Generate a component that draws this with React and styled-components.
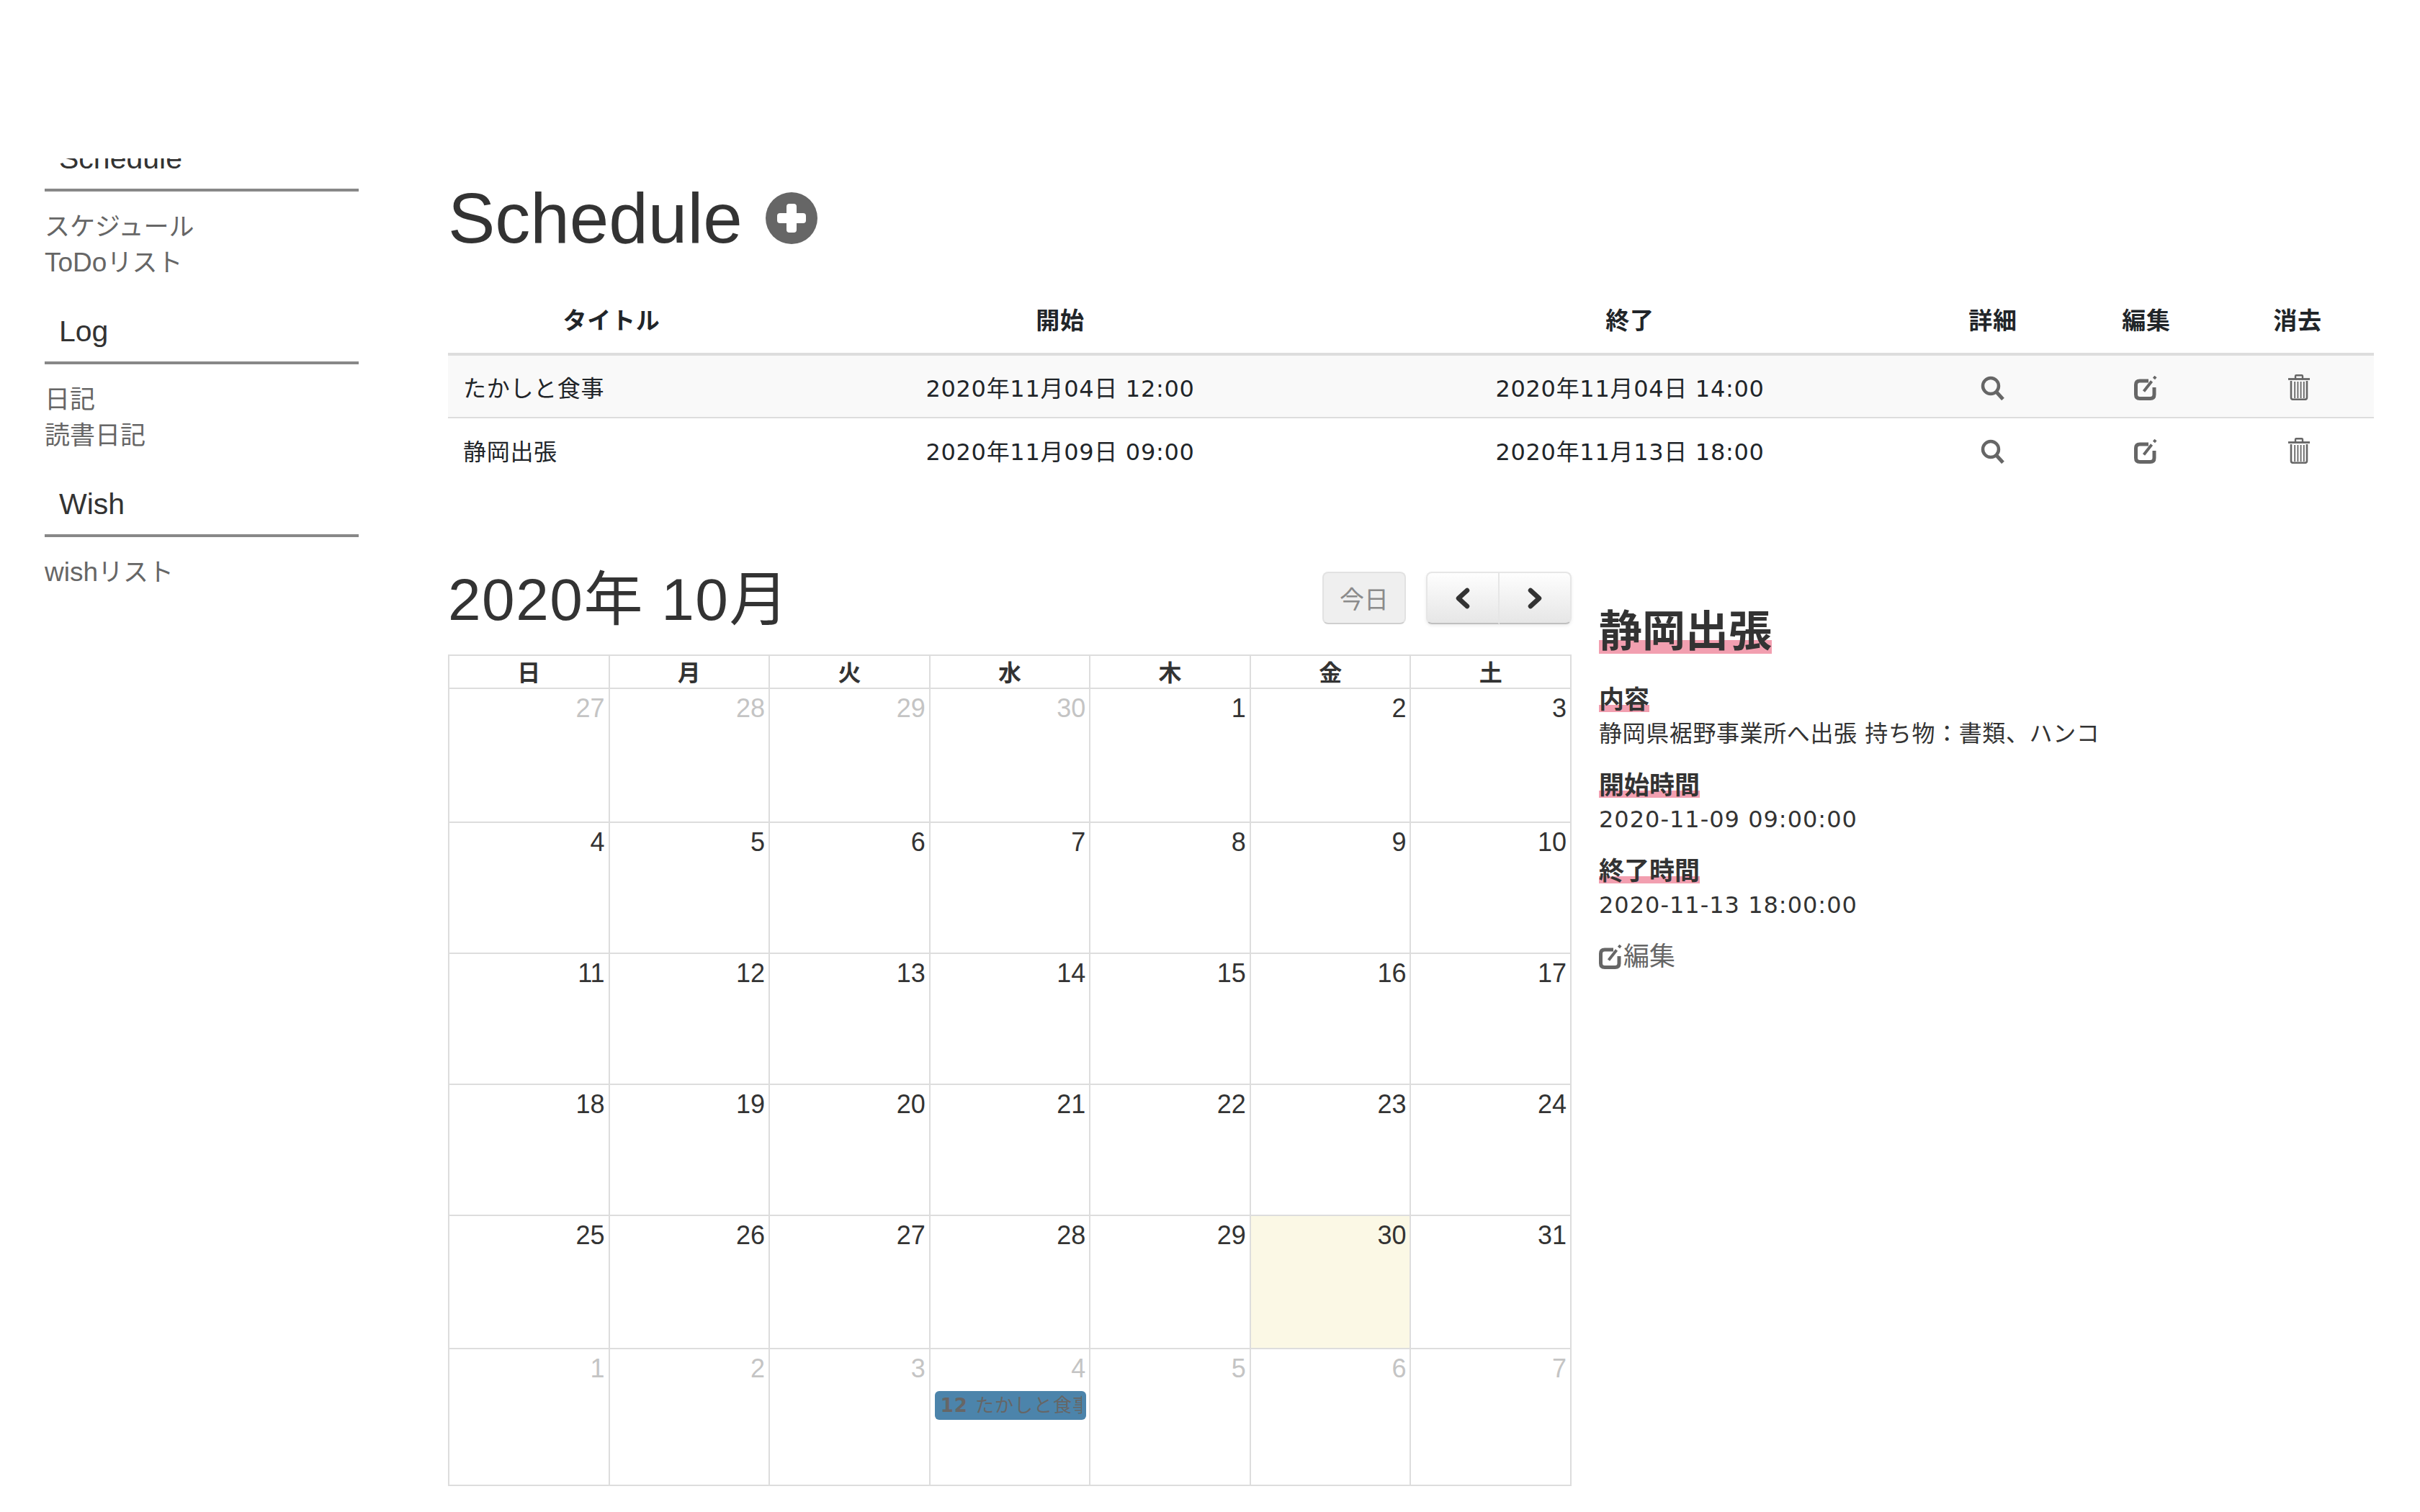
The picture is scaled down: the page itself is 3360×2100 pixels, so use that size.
import React from 'react'
import styled, { createGlobalStyle } from 'styled-components'

const SANS = '"Liberation Sans", "Noto Sans CJK JP", sans-serif'
const BODY = '"DejaVu Sans", "Noto Sans CJK JP", sans-serif'

const GlobalStyle = createGlobalStyle`
  html, body { margin: 0; padding: 0; background: #fff; }
  body { width: 3360px; height: 2100px; overflow: hidden; font-family: ${SANS}; color: #333; }
`

const Page = styled.div`
  display: flex;
  align-items: flex-start;
  width: 3360px;
  height: 2100px;
`

const Sidebar = styled.nav`
  flex: none;
  width: 436px;
  margin-left: 62px;
  padding-top: 220px;
`

const SideSection = styled.section`
  margin-bottom: 40px;
`

const SideHead = styled.h2`
  display: flex;
  align-items: flex-end;
  box-sizing: content-box;
  height: ${p => (p.$clipped ? '42px' : '72px')};
  margin: 0;
  padding: 0 0 0 20px;
  overflow: hidden;
  border-bottom: 4px solid #888;
  font-size: 41px;
  font-weight: 400;
  line-height: 60px;
  color: #333;
`

const SideHeadText = styled.span`
  display: block;
  padding-bottom: 12px;
`

const SideList = styled.ul`
  list-style: none;
  margin: 24px 0 0;
  padding: 0;
  font-size: 35px;
  line-height: 50px;
  color: #666;
`

const Latin = styled.span`
  font-size: 37px;
`

const Main = styled.main`
  flex: none;
  width: 2674px;
  margin-left: 124px;
  padding-top: 250px;
`

const TitleRow = styled.div`
  display: flex;
  align-items: center;
  gap: 32px;
  height: 106px;
  margin-bottom: 44px;
`

const Title = styled.h1`
  margin: 0;
  font-size: 98px;
  font-weight: 400;
  line-height: 106px;
  color: #333;
`

const ListTable = styled.table`
  width: 100%;
  table-layout: fixed;
  border-collapse: collapse;
  font-family: ${BODY};
  font-size: 32px;
  letter-spacing: 0.7px;
  color: #212529;
`

const HeadCell = styled.th`
  width: ${p => p.$w}px;
  height: 86px;
  padding: 0 0 4px;
  border-bottom: 4px solid #ddd;
  font-size: 33px;
  font-weight: 700;
  text-align: center;
`

const Row = styled.tr`
  height: 88px;
  background: ${p => (p.$striped ? '#f9f9f9' : '#fff')};
  border-bottom: ${p => (p.$striped ? '2px solid #ddd' : 'none')};
`

const Cell = styled.td`
  padding: ${p => (p.$left ? '0 0 0 21px' : '0')};
  text-align: ${p => (p.$left ? 'left' : 'center')};
  vertical-align: middle;
`

const Icon = styled.svg`
  display: inline-block;
  vertical-align: middle;
  fill: none;
  stroke: #666;
`

const TrashSvg = styled(Icon)`
  margin-left: 3px;
`

const Lower = styled.div`
  display: flex;
  gap: 38px;
  margin-top: 126px;
`

const CalendarCol = styled.div`
  flex: none;
  width: 1560px;
`

const Toolbar = styled.div`
  display: flex;
  align-items: center;
  height: 73px;
  margin-bottom: 42px;
`

const MonthTitle = styled.h2`
  flex: 1;
  margin: 0;
  padding-top: 4px;
  font-size: 82px;
  font-weight: 400;
  line-height: 76px;
  letter-spacing: 1.5px;
  color: #333;
  white-space: nowrap;
`

const TodayButton = styled.button`
  width: 116px;
  height: 73px;
  margin-right: 28px;
  padding: 0;
  border: 2px solid #e2e2e2;
  border-bottom-color: #cfcfcf;
  border-radius: 8px;
  background: #efefef;
  font-family: ${SANS};
  font-size: 34px;
  color: #8b8b8b;
`

const NavGroup = styled.div`
  display: flex;
  width: 202px;
  height: 73px;
  border-radius: 8px;
  box-shadow: 0 2px 4px rgba(0, 0, 0, 0.08);
`

const NavButton = styled.button`
  display: flex;
  flex: 1;
  align-items: center;
  justify-content: center;
  padding: 0;
  border: 2px solid #e6e6e6;
  border-bottom-color: #bfbfbf;
  border-left-width: ${p => (p.$right ? '0' : '2px')};
  border-radius: ${p => (p.$right ? '0 8px 8px 0' : '8px 0 0 8px')};
  background: linear-gradient(#fefefe, #e6e6e6);
`

const Chevron = styled.svg`
  fill: none;
  stroke: #333;
  stroke-width: 6.5;
  stroke-linecap: round;
  stroke-linejoin: round;
`

const Grid = styled.div`
  display: grid;
  grid-template-columns: repeat(7, 1fr);
  grid-template-rows: 46px 186px 182px 182px 182px 185px 190px;
  box-sizing: border-box;
  width: 1560px;
  border-top: 2px solid #ddd;
  border-left: 2px solid #ddd;
`

const Weekday = styled.div`
  border-right: 2px solid #ddd;
  border-bottom: 2px solid #ddd;
  font-size: 32px;
  font-weight: 700;
  line-height: 48px;
  text-align: center;
  color: #333;
`

const Day = styled.div`
  overflow: hidden;
  border-right: 2px solid #ddd;
  border-bottom: 2px solid #ddd;
  background: ${p => (p.$today ? '#fbf8e5' : '#fff')};
`

const DayNumber = styled.div`
  padding: 7px 5px 0 0;
  font-size: 36px;
  line-height: 40px;
  text-align: right;
  color: ${p => (p.$muted ? '#c4c4c4' : '#333')};
`

const EventChip = styled.div`
  height: 40px;
  margin: 11px 4px 0 6px;
  padding: 0 6px 0 8px;
  border-radius: 6px;
  background: #4c84ab;
  font-family: ${BODY};
  font-size: 26px;
  line-height: 40px;
  letter-spacing: 1px;
  color: #666;
`

const EventText = styled.div`
  overflow: hidden;
  white-space: nowrap;
`

const EventTime = styled.b`
  margin-right: 10px;
  font-weight: 700;
`

const Detail = styled.aside`
  flex: 1;
  padding-top: 52px;
  font-family: ${BODY};
  font-size: 32px;
  color: #333;
`

const Marker = styled.span`
  display: table;
  background: linear-gradient(transparent 70%, #f29fb0 70%);
  font-family: ${BODY};
  font-weight: 700;
  letter-spacing: 0;
`

const DetailTitle = styled(Marker)`
  margin-bottom: 47px;
  font-size: 60px;
  line-height: 62px;
`

const DetailLabel = styled(Marker)`
  margin-bottom: 8px;
  font-size: 35px;
  line-height: 34px;
`

const DetailValue = styled.p`
  margin: 0 0 33px;
  line-height: 44px;
  letter-spacing: ${p => (p.$tight ? '0.6px' : '1px')};
  white-space: nowrap;
`

const EditLink = styled.a`
  display: flex;
  align-items: center;
  margin-top: -5px;
  font-family: ${SANS};
  font-size: 36px;
  line-height: 44px;
  color: #666;
`

const PlusIcon = () => (
  <svg width="72" height="72" viewBox="0 0 72 72">
    <circle cx="36" cy="36" r="36" fill="#666" />
    <rect x="16" y="29" width="40" height="14" rx="4" fill="#fff" />
    <rect x="29" y="16" width="14" height="40" rx="4" fill="#fff" />
  </svg>
)

const SearchIcon = () => (
  <Icon width="34" height="34" viewBox="0 0 34 34" strokeWidth="4.5">
    <circle cx="14" cy="14" r="11" />
    <path d="M21.5 22 L31 32.5" strokeWidth="5" />
  </Icon>
)

const EditIcon = () => (
  <Icon width="34" height="34" viewBox="0 0 34 34" strokeWidth="5">
    <path d="M20 7 H8 Q2.5 7 2.5 12.5 V26 Q2.5 31.5 8 31.5 H22.5 Q28 31.5 28 26 V16" />
    <path d="M13.5 21.5 L24.5 7.5" strokeWidth="4" />
    <path d="M27.5 4 L30 1" strokeWidth="4" />
  </Icon>
)

const TrashIcon = () => (
  <TrashSvg width="30" height="36" viewBox="0 0 30 36" strokeWidth="2.4">
    <path d="M0 6.5 H30" strokeWidth="2.8" />
    <path d="M10 6 V2.4 Q10 1.2 11.2 1.2 H18.8 Q20 1.2 20 2.4 V6" />
    <path d="M4 9 V32 Q4 34.8 6.8 34.8 H23.2 Q26 34.8 26 32 V9" strokeWidth="2.6" />
    <path d="M9.2 10 V33 M13.4 10 V33 M17.6 10 V33 M21.8 10 V33" strokeWidth="1.8" />
  </TrashSvg>
)

const sideSections = [
  { title: 'Schedule', clipped: true, items: [['', 'スケジュール'], ['ToDo', 'リスト']] },
  { title: 'Log', items: [['', '日記'], ['', '読書日記']] },
  { title: 'Wish', items: [['wish', 'リスト']] },
]

const columns = [
  ['タイトル', 454],
  ['開始', 792],
  ['終了', 790],
  ['詳細', 218],
  ['編集', 208],
  ['消去', 212],
]

const schedules = [
  { title: 'たかしと食事', start: '2020年11月04日 12:00', end: '2020年11月04日 14:00' },
  { title: '静岡出張', start: '2020年11月09日 09:00', end: '2020年11月13日 18:00' },
]

const weekdays = ['日', '月', '火', '水', '木', '金', '土']

const days = [
  ...[27, 28, 29, 30].map(n => ({ n, muted: true })),
  ...Array.from({ length: 31 }, (_, i) => ({ n: i + 1, today: i + 1 === 30 })),
  ...[1, 2, 3, 4, 5, 6, 7].map(n => ({ n, muted: true, event: n === 4 })),
]

export default function App() {
  return (
    <Page>
      <GlobalStyle />
      <Sidebar>
        {sideSections.map(section => (
          <SideSection key={section.title}>
            <SideHead $clipped={section.clipped}>
              <SideHeadText>{section.title}</SideHeadText>
            </SideHead>
            <SideList>
              {section.items.map(([latin, text]) => (
                <li key={text}>
                  {latin && <Latin>{latin}</Latin>}
                  {text}
                </li>
              ))}
            </SideList>
          </SideSection>
        ))}
      </Sidebar>

      <Main>
        <TitleRow>
          <Title>Schedule</Title>
          <PlusIcon />
        </TitleRow>

        <ListTable>
          <thead>
            <tr>
              {columns.map(([label, w]) => (
                <HeadCell key={label} $w={w}>{label}</HeadCell>
              ))}
            </tr>
          </thead>
          <tbody>
            {schedules.map((s, i) => (
              <Row key={s.title} $striped={i === 0}>
                <Cell $left>{s.title}</Cell>
                <Cell>{s.start}</Cell>
                <Cell>{s.end}</Cell>
                <Cell><SearchIcon /></Cell>
                <Cell><EditIcon /></Cell>
                <Cell><TrashIcon /></Cell>
              </Row>
            ))}
          </tbody>
        </ListTable>

        <Lower>
          <CalendarCol>
            <Toolbar>
              <MonthTitle>2020年 10月</MonthTitle>
              <TodayButton>今日</TodayButton>
              <NavGroup>
                <NavButton>
                  <Chevron width="22" height="30" viewBox="0 0 22 30">
                    <path d="M17 4 L5 15 L17 26" />
                  </Chevron>
                </NavButton>
                <NavButton $right>
                  <Chevron width="22" height="30" viewBox="0 0 22 30">
                    <path d="M5 4 L17 15 L5 26" />
                  </Chevron>
                </NavButton>
              </NavGroup>
            </Toolbar>

            <Grid>
              {weekdays.map(d => (
                <Weekday key={d}>{d}</Weekday>
              ))}
              {days.map((d, i) => (
                <Day key={i} $today={d.today}>
                  <DayNumber $muted={d.muted}>{d.n}</DayNumber>
                  {d.event && (
                    <EventChip>
                      <EventText>
                        <EventTime>12</EventTime>たかしと食事
                      </EventText>
                    </EventChip>
                  )}
                </Day>
              ))}
            </Grid>
          </CalendarCol>

          <Detail>
            <DetailTitle>静岡出張</DetailTitle>
            <DetailLabel>内容</DetailLabel>
            <DetailValue $tight>静岡県裾野事業所へ出張 持ち物：書類、ハンコ</DetailValue>
            <DetailLabel>開始時間</DetailLabel>
            <DetailValue>2020-11-09 09:00:00</DetailValue>
            <DetailLabel>終了時間</DetailLabel>
            <DetailValue>2020-11-13 18:00:00</DetailValue>
            <EditLink>
              <EditIcon />編集
            </EditLink>
          </Detail>
        </Lower>
      </Main>
    </Page>
  )
}
